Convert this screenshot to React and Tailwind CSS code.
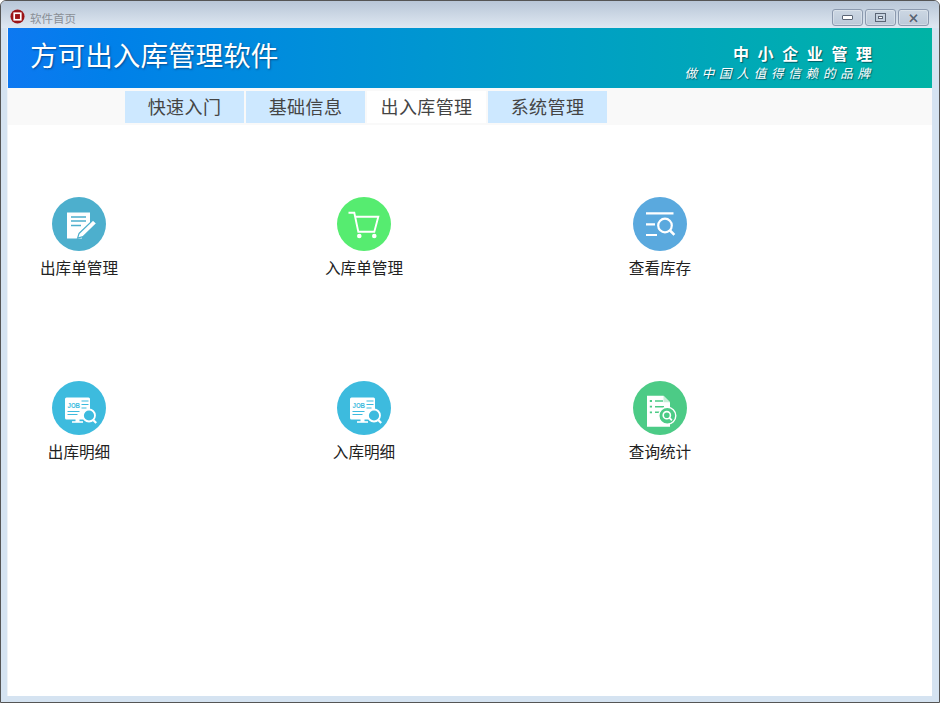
import React from "react";

const tabs = [
  { label: "快速入门" },
  { label: "基础信息" },
  { label: "出入库管理", active: true },
  { label: "系统管理" },
];

function OutIcon() {
  return (
    <svg viewBox="0 0 54 54" className="w-full h-full">
      <circle cx="27" cy="27" r="27" fill="#4dafcd" />
      <path d="M15 15.5h23v13l-8 9v4H15z" fill="#fff" />
      <path d="M19 20h15M19 24h15M19 28.5h10" stroke="#4dafcd" strokeWidth="1.6" />
      <path d="M27 36.5l14-13.5 3.6 3.4L31 39.6l-5.4 1.6z" fill="#fff" stroke="#4dafcd" strokeWidth="1.2" />
    </svg>
  );
}

function CartIcon() {
  return (
    <svg viewBox="0 0 54 54" className="w-full h-full">
      <circle cx="27" cy="27" r="27" fill="#56ec70" />
      <path d="M11.5 15.7h5.8l4 19h16l4-15H17.6" fill="none" stroke="#fff" strokeWidth="1.9" />
      <circle cx="22.3" cy="39" r="2.3" fill="#fff" />
      <circle cx="37.3" cy="39" r="2.3" fill="#fff" />
    </svg>
  );
}

function StockIcon() {
  return (
    <svg viewBox="0 0 54 54" className="w-full h-full">
      <circle cx="27" cy="27" r="27" fill="#5aa9de" />
      <path d="M13 16.3h27.5M13 27.3h9M13 38h11" stroke="#fff" strokeWidth="2.2" />
      <circle cx="32" cy="28.5" r="6.8" fill="none" stroke="#fff" strokeWidth="2.2" />
      <path d="M37 33.5l4.4 4.4" stroke="#fff" strokeWidth="2.6" />
    </svg>
  );
}

function JobIcon() {
  return (
    <svg viewBox="0 0 54 54" className="w-full h-full">
      <circle cx="27" cy="27" r="27" fill="#3dbbde" />
      <rect x="13" y="16.5" width="25" height="22" rx="1.5" fill="#fff" />
      <text x="15.5" y="26.5" fontSize="7.5" fontWeight="700" textLength="12.5" lengthAdjust="spacingAndGlyphs" fill="#3dbbde" fontFamily="'Liberation Sans', sans-serif">JOB</text>
      <path d="M29.5 20h7M29.5 23.5h7M29.5 27h5M15.5 30.5h12M15.5 33.5h10" stroke="#3dbbde" strokeWidth="1.1" />
      <path d="M20 41h11" stroke="#fff" strokeWidth="1.6" />
      <path d="M23.5 38h4v3h-4z" fill="#fff" />
      <circle cx="37" cy="34.5" r="6" fill="#3dbbde" stroke="#fff" strokeWidth="1.8" />
      <path d="M41.2 39l3 3" stroke="#fff" strokeWidth="2.2" />
    </svg>
  );
}

function QueryIcon() {
  return (
    <svg viewBox="0 0 54 54" className="w-full h-full">
      <circle cx="27" cy="27" r="27" fill="#4ccb86" />
      <path d="M14 14.7h16.5l6.5 6.5v24.5H14z" fill="#fff" />
      <path d="M30.5 14.7v6.5h6.5" fill="#c7eed8" />
      <path d="M22 20h8M22 25.7h9M22 31.3h5" stroke="#4ccb86" strokeWidth="1.4" />
      <path d="M16.8 20h2.2M16.8 25.7h2.2M16.8 31.3h2.2" stroke="#4ccb86" strokeWidth="1.8" />
      <circle cx="34.3" cy="34.7" r="8.5" fill="#4ccb86" stroke="#fff" strokeWidth="1.4" />
      <circle cx="33.8" cy="34.2" r="3.6" fill="none" stroke="#fff" strokeWidth="1.6" />
      <path d="M36.3 36.7l2.6 2.6" stroke="#fff" strokeWidth="1.8" />
    </svg>
  );
}

const items = [
  { label: "出库单管理", icon: <OutIcon /> },
  { label: "入库单管理", icon: <CartIcon /> },
  { label: "查看库存", icon: <StockIcon /> },
  { label: "出库明细", icon: <JobIcon /> },
  { label: "入库明细", icon: <JobIcon /> },
  { label: "查询统计", icon: <QueryIcon /> },
];

function WinButton({ children }) {
  return (
    <div className="w-[31px] h-[17px] rounded-[3px] border border-[#8b99ae] bg-gradient-to-b from-[#ccd7e3] to-[#bcc9d9] flex items-center justify-center shadow-[inset_0_0_0_1px_rgba(255,255,255,0.3)]">
      {children}
    </div>
  );
}

export default function App() {
  return (
    <div className="w-[940px] h-[703px] flex flex-col overflow-hidden bg-[#d5e3f1] border border-[#555] rounded-t-[6px] font-['Noto_Sans_CJK_SC',sans-serif]">
      <div className="h-[27px] shrink-0 flex items-start pl-[9px] pr-[8px] bg-gradient-to-b from-[#b8c6d7] to-[#dfe8f2]">
        <svg viewBox="0 0 16 16" className="w-[15px] h-[15px] mt-[8px]">
          <circle cx="8" cy="8" r="7.5" fill="#9c1518" />
          <rect x="4.5" y="4.5" width="7" height="7" fill="none" stroke="#fff" strokeWidth="1.8" />
          <rect x="6.8" y="6.8" width="2.4" height="2.4" fill="#9c1518" />
        </svg>
        <span className="ml-[5px] mt-[8px] text-[11.5px] leading-[18px] text-[#8a8f96]">软件首页</span>
        <div className="ml-auto mt-[8px] mr-[2px] flex gap-[2px]">
          <WinButton>
            <div className="w-[11px] h-[5px] rounded-[1px] border border-[#5b6676] bg-white" />
          </WinButton>
          <WinButton>
            <div className="w-[11px] h-[9px] border border-[#5b6676] flex items-center justify-center">
              <div className="w-[5px] h-[3px] border border-[#5b6676] bg-white" />
            </div>
          </WinButton>
          <WinButton>
            <span className="text-[13px] leading-none font-bold text-[#5b6676] [text-shadow:0_0_1px_#fff]">✕</span>
          </WinButton>
        </div>
      </div>

      <div className="flex-1 ml-[6px] mr-[7px] mb-[6px] flex flex-col bg-white min-h-0 border-l border-[#eef3f8]">
        <div className="h-[60px] shrink-0 flex items-center justify-between pl-[22px] pr-[60px] bg-gradient-to-r from-[#0d78f1] to-[#00b3a5] text-white">
          <h1 className="mb-[6px] text-[27.6px] leading-none [text-shadow:1px_1px_2px_rgba(0,40,90,0.6)]">方可出入库管理软件</h1>
          <div className="mt-[10px] flex flex-col items-end [text-shadow:1px_1px_1px_rgba(0,60,70,0.7)]">
            <span className="text-[16px] leading-[20px] tracking-[8.6px] font-bold -mr-[8.6px]">中小企业管理</span>
            <span className="text-[12.5px] leading-[20px] tracking-[4.8px] italic -mr-[2.8px]">做中国人值得信赖的品牌</span>
          </div>
        </div>

        <div className="h-[37px] shrink-0 flex items-start gap-[2px] pt-[3px] pl-[117px] bg-[#f9f9f9]">
          {tabs.map((t) => (
            <div
              key={t.label}
              className={`w-[119px] h-[32px] pb-[1px] flex items-center justify-center text-[18px] tracking-[0.4px] text-[#444] ${
                t.active ? "bg-white" : "bg-[#cde8ff]"
              }`}
            >
              {t.label}
            </div>
          ))}
        </div>

        <div className="grid grid-cols-[142px_428px_164px] grid-rows-[184px_184px] pt-[72px]">
          {items.map((it) => (
            <div key={it.label} className="flex flex-col items-center">
              <div className="w-[54px] h-[54px]">{it.icon}</div>
              <span className="mt-[4px] text-[15.6px] leading-[24px] text-[#222] whitespace-nowrap">{it.label}</span>
            </div>
          ))}
        </div>
      </div>
    </div>
  );
}
